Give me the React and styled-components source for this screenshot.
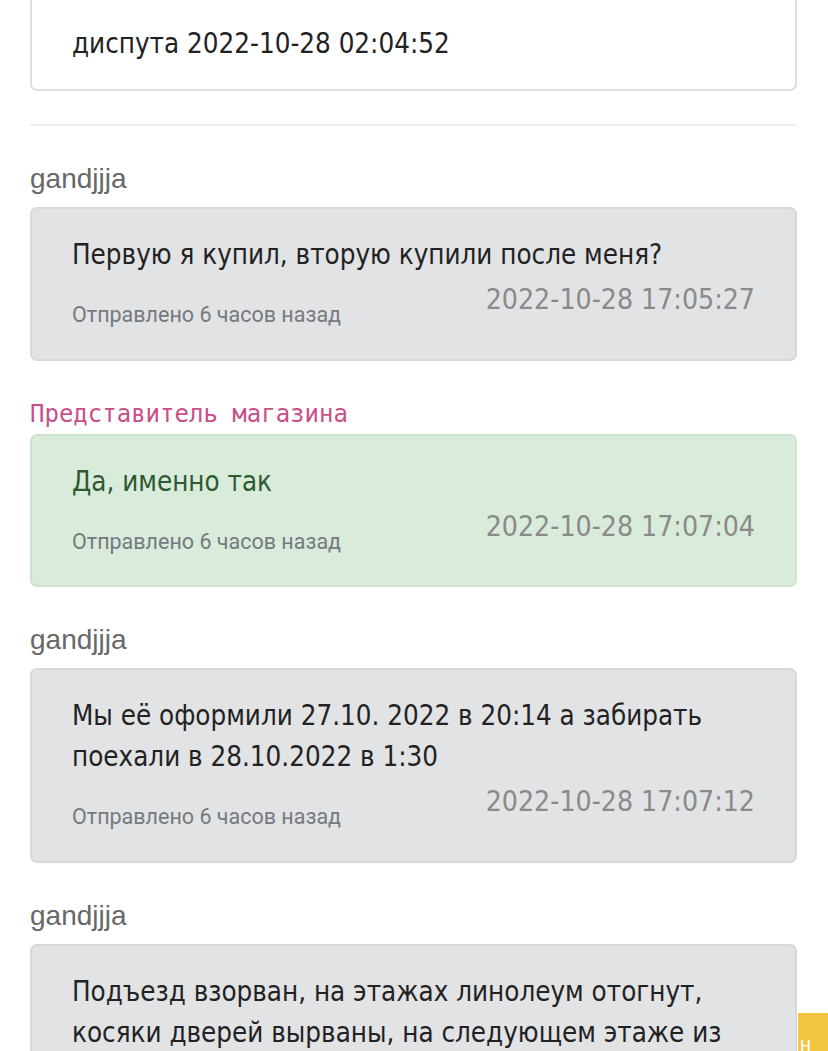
import React from 'react';
import styled, { createGlobalStyle } from 'styled-components';

const GlobalStyle = createGlobalStyle`
  html, body {
    margin: 0;
    padding: 0;
    background: #fff;
    overflow: hidden;
  }
  body {
    font-family: "Liberation Sans Narrow", "DejaVu Sans Condensed", "Liberation Sans", sans-serif;
  }
`;

const messages = [
  {
    author: 'gandjjja',
    text: ['Первую я купил, вторую купили после меня?'],
    date: '2022-10-28 17:05:27',
  },
  {
    author: 'Представитель магазина',
    shop: true,
    text: ['Да, именно так'],
    date: '2022-10-28 17:07:04',
  },
  {
    author: 'gandjjja',
    text: ['Мы её оформили 27.10. 2022 в 20:14 а забирать', 'поехали в 28.10.2022 в 1:30'],
    date: '2022-10-28 17:07:12',
  },
  {
    author: 'gandjjja',
    text: [
      'Подъезд взорван, на этажах линолеум отогнут,',
      'косяки дверей вырваны, на следующем этаже из',
      'квартиры вынесли всё',
    ],
    date: '2022-10-28 17:09:40',
  },
];

export default function App() {
  return (
    <>
      <GlobalStyle />
      <Page>
        <TopCard>
          <MessageLine>диспута 2022-10-28 02:04:52</MessageLine>
        </TopCard>
        <Divider />

        {messages.map((m, i) => (
          <Message key={i}>
            <Author $shop={m.shop}>{m.author}</Author>
            <Bubble $shop={m.shop}>
              {m.text.map((line, j) => (
                <MessageLine key={j} $shop={m.shop}>{line}</MessageLine>
              ))}
              <Meta>
                <Sent>Отправлено 6 часов назад</Sent>
                <Stamp>{m.date}</Stamp>
              </Meta>
            </Bubble>
          </Message>
        ))}
      </Page>
      <HelpTab>н</HelpTab>
    </>
  );
}

const Page = styled.div`
  padding: 0 31px 0 30px;
`;

const TopCard = styled.div`
  border: 2px solid #dedede;
  border-top: none;
  border-radius: 0 0 7px 7px;
  padding: 23px 40px 25px;
`;

const Divider = styled.div`
  height: 2px;
  background: #eeeeee;
  margin: 33px 0 0;
`;

const Message = styled.div`
  padding-top: 38px;
`;

const Author = styled.div`
  font-family: ${p => (p.$shop ? '"DejaVu Sans Mono", monospace' : '"Liberation Sans Narrow", sans-serif')};
  font-size: ${p => (p.$shop ? '24px' : '28px')};
  line-height: 30px;
  height: 30px;
  color: ${p => (p.$shop ? '#c84f89' : '#686868')};
  margin-bottom: ${p => (p.$shop ? '5px' : '13px')};
`;

const Bubble = styled.div`
  background: ${p => (p.$shop ? '#d9ebdb' : '#e2e3e5')};
  border: 2px solid ${p => (p.$shop ? '#cde3d0' : '#d7d8da')};
  border-radius: 7px;
  padding: 25px 40px 29.5px;
`;

const MessageLine = styled.div`
  font-size: 27.5px;
  line-height: 41px;
  color: ${p => (p.$shop ? '#2d5a2f' : '#222')};
  white-space: nowrap;
`;

const Meta = styled.div`
  display: flex;
  justify-content: space-between;
  align-items: flex-start;
`;

const Sent = styled.div`
  font-family: Roboto, "Noto Sans", sans-serif;
  font-size: 21.5px;
  line-height: 28px;
  margin-top: 26px;
  color: #757a80;
`;

const Stamp = styled.div`
  font-size: 28.2px;
  line-height: 40px;
  margin-top: 5px;
  color: #8a8a8a;
`;

const HelpTab = styled.div`
  position: fixed;
  left: 798px;
  top: 1013px;
  width: 60px;
  height: 60px;
  background: #f4c542;
  color: #fff;
  font-family: "Liberation Sans", sans-serif;
  font-size: 20px;
  padding: 20px 0 0 2px;
  box-sizing: border-box;
`;
